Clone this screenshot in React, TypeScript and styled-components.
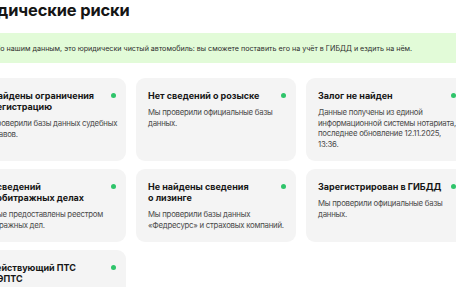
import React from "react";
import styled, { createGlobalStyle } from "styled-components";

const GlobalStyle = createGlobalStyle`
    html, body {
        margin: 0;
        padding: 0;
        background: #ffffff;
        overflow: hidden;
    }

    body {
        font-family: Inter, "Noto Sans", sans-serif;
        color: #1b1b1b;
    }
`;

const Page = styled.div`
    width: 520px;
    margin-left: -34px;
`;

const Heading = styled.h2`
    margin: 0 0 13px -6px;
    font-size: 16.4px;
    line-height: 20px;
    font-weight: 700;
    letter-spacing: -0.1px;
    color: #151515;
`;

const Banner = styled.div`
    display: flex;
    align-items: center;
    height: 30px;
    padding: 0 0 0 29px;
    margin-bottom: 15px;
    border-radius: 8px;
    background: #e2fbd8;
    font-size: 7.15px;
    color: #2d2d2d;
    white-space: nowrap;
`;

const Grid = styled.div`
    display: grid;
    grid-template-columns: repeat(3, 160px);
    column-gap: 10px;
    row-gap: 8px;
`;

const Card = styled.div`
    display: flex;
    flex-direction: column;
    gap: 6px;
    padding: 12px 6px 12px 12px;
    border-radius: 9px;
    background: #f4f4f4;
`;

const CardHead = styled.div`
    display: flex;
    align-items: flex-start;
    justify-content: space-between;
    gap: 6px;
`;

const Title = styled.div`
    font-size: 9px;
    line-height: 11px;
    font-weight: 700;
    color: #161616;
`;

const Dot = styled.span<{ $color: string }>`
    flex: none;
    width: 5px;
    height: 5px;
    margin-top: 3px;
    margin-right: 4px;
    border-radius: 50%;
    background: ${(p) => p.$color};
`;

const Text = styled.div`
    font-size: 7.8px;
    line-height: 10.5px;
    letter-spacing: -0.24px;
    color: #4a4a4a;
`;

interface Check {
    title: string;
    text: string;
}

const checks: Check[] = [
    {
        title: "Не найдены ограничения на\u00a0регистрацию",
        text: "Мы проверили базы данных судебных приставов.",
    },
    {
        title: "Нет сведений о\u00a0розыске",
        text: "Мы проверили официальные базы данных.",
    },
    {
        title: "Залог не найден",
        text: "Данные получены из единой информационной системы нотариата, последнее обновление 12.11.2025, 13:36.",
    },
    {
        title: "Нет сведений об\u00a0арбитражных делах",
        text: "Данные предоставлены реестром арбитражных дел.",
    },
    {
        title: "Не найдены сведения о\u00a0лизинге",
        text: "Мы проверили базы данных «Федресурс» и страховых компаний.",
    },
    {
        title: "Зарегистрирован в\u00a0ГИБДД",
        text: "Мы проверили официальные базы данных.",
    },
    {
        title: "Недействующий ПТС или\u00a0ЭПТС",
        text: "Мы проверили официальные базы данных.",
    },
];

const App: React.FC = () => {
    return (
        <>
            <GlobalStyle />
            <Page>
                <Heading>Юридические риски</Heading>
                <Banner>
                    По нашим данным, это юридически чистый автомобиль: вы
                    сможете поставить его на учёт в ГИБДД и ездить на нём.
                </Banner>
                <Grid>
                    {checks.map((c) => (
                        <Card key={c.title}>
                            <CardHead>
                                <Title>{c.title}</Title>
                                <Dot $color="#2fc46a" />
                            </CardHead>
                            <Text>{c.text}</Text>
                        </Card>
                    ))}
                </Grid>
            </Page>
        </>
    );
};

export default App;
